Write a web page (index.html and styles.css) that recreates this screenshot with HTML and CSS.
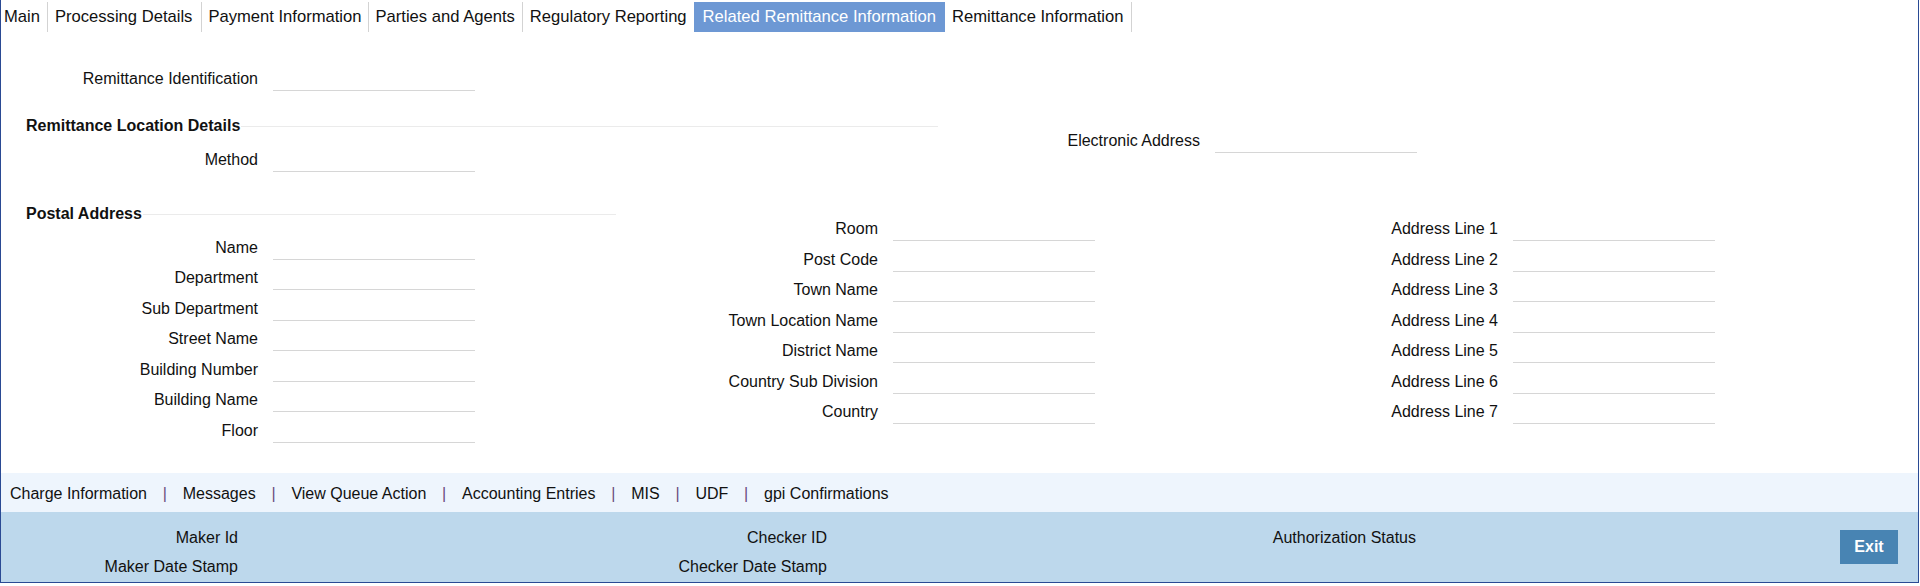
FILE: index.html
```html
<!DOCTYPE html>
<html lang="en">
<head>
    <meta charset="UTF-8">
    <meta name="viewport" content="width=device-width, initial-scale=1.0">
    <title>Related Remittance Information</title>
    <link rel="stylesheet" href="styles.css">
</head>
<body>

<div class="frame">
    <div class="tabs">
        <a class="tab">Main</a>
        <a class="tab">Processing Details</a>
        <a class="tab">Payment Information</a>
        <a class="tab">Parties and Agents</a>
        <a class="tab">Regulatory Reporting</a>
        <a class="tab active">Related Remittance Information</a>
        <a class="tab">Remittance Information</a>
    </div>

    <div class="content">
        <div class="field">
            <label for="rmtId">Remittance Identification</label>
            <input type="text" id="rmtId">
        </div>

        <div class="section section-location">
            <div class="col col-wide">
                <div class="legend">Remittance Location Details</div>
                <div class="field">
                    <label for="method">Method</label>
                    <input type="text" id="method">
                </div>
            </div>
            <div class="col">
                <div class="field">
                    <label for="elecAddr">Electronic Address</label>
                    <input type="text" id="elecAddr">
                </div>
            </div>
        </div>

        <div class="section section-postal">
            <div class="col">
                <div class="legend">Postal Address</div>
                <div class="field"><label for="name">Name</label><input type="text" id="name"></div>
                <div class="field"><label for="dept">Department</label><input type="text" id="dept"></div>
                <div class="field"><label for="subDept">Sub Department</label><input type="text" id="subDept"></div>
                <div class="field"><label for="street">Street Name</label><input type="text" id="street"></div>
                <div class="field"><label for="bldgNo">Building Number</label><input type="text" id="bldgNo"></div>
                <div class="field"><label for="bldgName">Building Name</label><input type="text" id="bldgName"></div>
                <div class="field"><label for="floor">Floor</label><input type="text" id="floor"></div>
            </div>
            <div class="col">
                <div class="field"><label for="room">Room</label><input type="text" id="room"></div>
                <div class="field"><label for="postCode">Post Code</label><input type="text" id="postCode"></div>
                <div class="field"><label for="town">Town Name</label><input type="text" id="town"></div>
                <div class="field"><label for="townLoc">Town Location Name</label><input type="text" id="townLoc"></div>
                <div class="field"><label for="district">District Name</label><input type="text" id="district"></div>
                <div class="field"><label for="subDiv">Country Sub Division</label><input type="text" id="subDiv"></div>
                <div class="field"><label for="country">Country</label><input type="text" id="country"></div>
            </div>
            <div class="col">
                <div class="field"><label for="adr1">Address Line 1</label><input type="text" id="adr1"></div>
                <div class="field"><label for="adr2">Address Line 2</label><input type="text" id="adr2"></div>
                <div class="field"><label for="adr3">Address Line 3</label><input type="text" id="adr3"></div>
                <div class="field"><label for="adr4">Address Line 4</label><input type="text" id="adr4"></div>
                <div class="field"><label for="adr5">Address Line 5</label><input type="text" id="adr5"></div>
                <div class="field"><label for="adr6">Address Line 6</label><input type="text" id="adr6"></div>
                <div class="field"><label for="adr7">Address Line 7</label><input type="text" id="adr7"></div>
            </div>
        </div>
    </div>

    <div class="toolbar">
        <a>Charge Information</a><span class="sep">|</span>
        <a>Messages</a><span class="sep">|</span>
        <a>View Queue Action</a><span class="sep">|</span>
        <a>Accounting Entries</a><span class="sep">|</span>
        <a>MIS</a><span class="sep">|</span>
        <a>UDF</a><span class="sep">|</span>
        <a>gpi Confirmations</a>
    </div>

    <div class="audit">
        <div class="audit-grid">
            <div class="audit-item"><span>Maker Id</span></div>
            <div class="audit-item"><span>Checker ID</span></div>
            <div class="audit-item"><span>Authorization Status</span></div>
            <div class="audit-item"><span>Maker Date Stamp</span></div>
            <div class="audit-item"><span>Checker Date Stamp</span></div>
        </div>
        <button class="btn-exit">Exit</button>
    </div>
</div>

</body>
</html>
```

FILE: styles.css
```css
body {
    margin: 0;
    font-family: "Liberation Sans", Arial, sans-serif;
    font-size: 16px;
    color: #111;
    background: #fff;
}
.frame {
    width: 1919px;
    height: 583px;
    box-sizing: border-box;
    border: 1px solid #2a4a94;
    border-top: none;
    display: flex;
    flex-direction: column;
}

/* tabs */
.tabs {
    display: flex;
    height: 30px;
    margin-top: 2px;
    flex-shrink: 0;
}
.tab {
    padding: 0 7px;
    line-height: 30px;
    font-size: 16.6px;
    white-space: nowrap;
    border-right: 1px solid #d3d3d3;
    cursor: pointer;
}
.tab:first-child {
    padding-left: 3px;
}
.tab:nth-child(2) {
    padding-right: 9px;
}
.tab:nth-child(3) {
    padding: 0 6px;
}
.tab.active {
    background: #6d98d4;
    color: #fff;
    border-right: none;
    margin-left: -1px;
    padding: 0 9px;
}

/* form */
.content {
    height: 441px;
    box-sizing: border-box;
    padding: 32px 0 0 25px;
    flex-shrink: 0;
}
.field {
    display: flex;
    align-items: center;
    height: 30.5px;
}
.field label {
    width: 232px;
    flex-shrink: 0;
    text-align: right;
}
.field input {
    margin-left: 15px;
    width: 202px;
    height: 24px;
    box-sizing: border-box;
    padding: 0 4px;
    border: none;
    border-bottom: 1px solid #d6d6d6;
    background: transparent;
    font: inherit;
    outline: none;
}
.section {
    display: flex;
    gap: 30px;
}
.section-location {
    margin-top: 31.5px;
}
.section-postal {
    margin-top: 39px;
}
.col {
    width: 590px;
}
.col-wide {
    width: 912px;
}
.legend {
    display: flex;
    align-items: center;
    height: 18px;
    margin: -9px 0 9.5px;
    font-weight: bold;
    white-space: nowrap;
}
.legend::after {
    content: "";
    flex: 1;
    height: 1px;
    margin-left: 1px;
    background: #ebebeb;
}

/* bottom links */
.toolbar {
    height: 39px;
    box-sizing: border-box;
    flex-shrink: 0;
    display: flex;
    align-items: center;
    padding: 2px 0 0 9px;
    background: #eef5fd;
}
.toolbar a {
    cursor: pointer;
}
.toolbar .sep {
    padding: 0 15.8px;
    color: #6a4c7c;
}

/* audit */
.audit {
    height: 70px;
    flex-shrink: 0;
    display: flex;
    align-items: center;
    background: #bdd8ec;
}
.audit-grid {
    align-self: flex-start;
    display: grid;
    grid-template-columns: repeat(3, 589px);
    grid-auto-rows: 29px;
    padding-top: 11px;
}
.audit-item {
    display: flex;
    align-items: center;
}
.audit-item span {
    width: 237px;
    text-align: right;
}
.btn-exit {
    margin-left: auto;
    margin-right: 20px;
    width: 58px;
    height: 34px;
    border: none;
    background: #4884b3;
    color: #fff;
    font: bold 16px "Liberation Sans", Arial, sans-serif;
    cursor: pointer;
}
```
